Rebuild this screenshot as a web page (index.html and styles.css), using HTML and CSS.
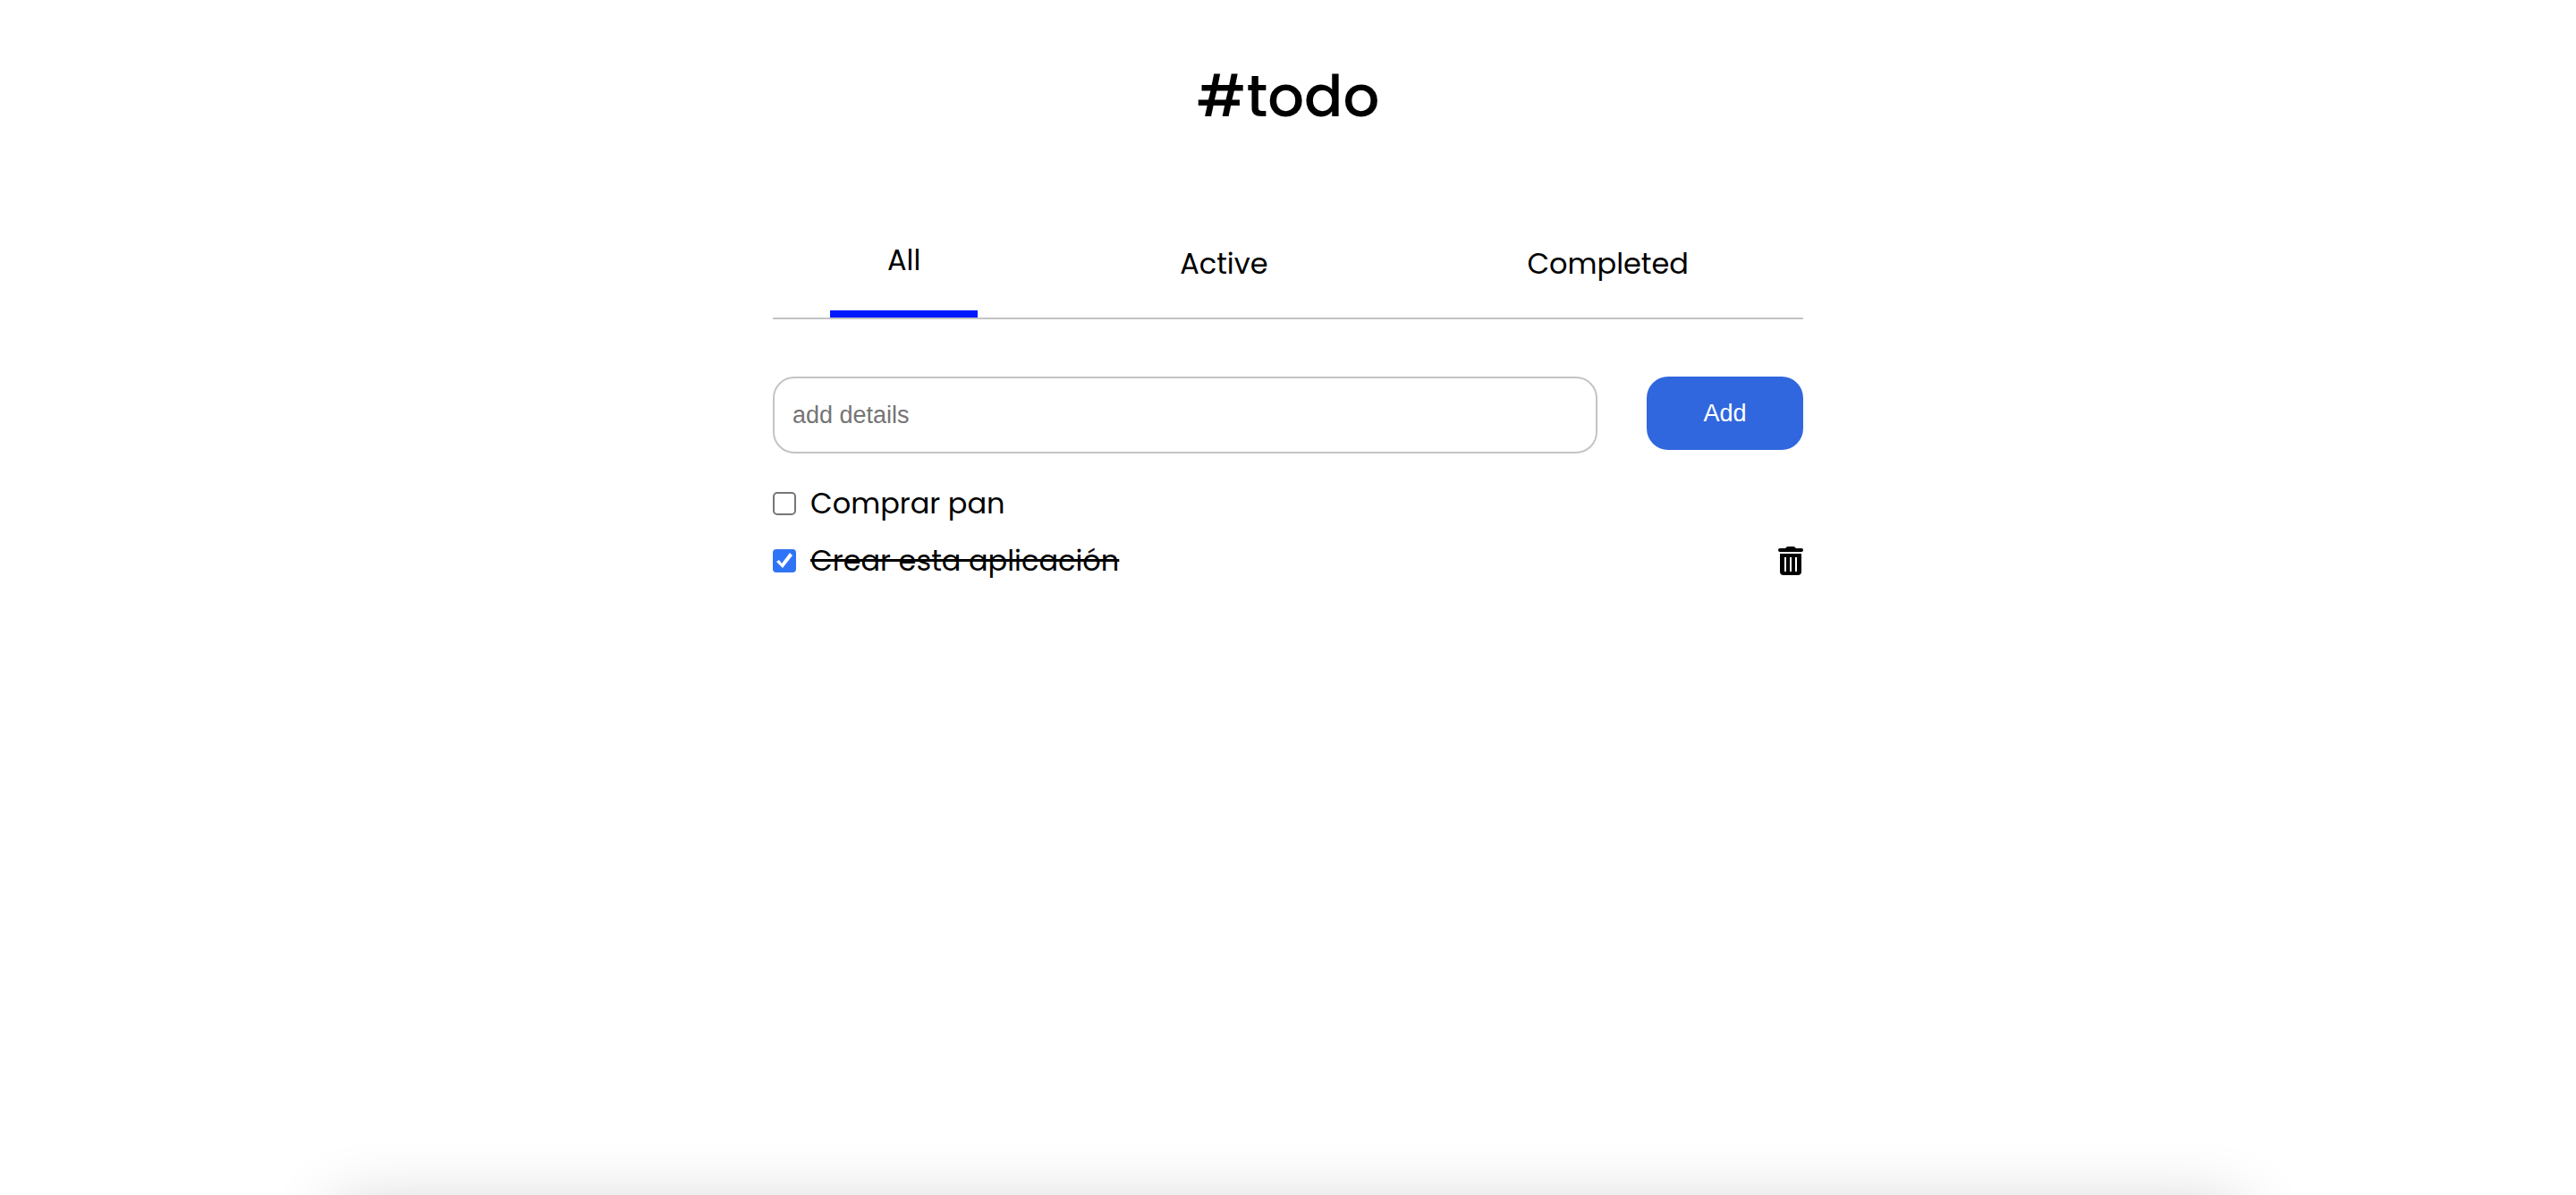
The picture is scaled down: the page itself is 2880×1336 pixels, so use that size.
FILE: index.html
```html
<!DOCTYPE html>
<html lang="es">
<head>
<meta charset="utf-8">
<meta name="viewport" content="width=device-width, initial-scale=1">
<title>#todo</title>
<link rel="stylesheet" href="styles.css">
</head>
<body>
<main class="app">
  <h1 class="title">#todo</h1>
  <nav class="tabs" aria-label="Filter">
    <button class="tab tab-selected" type="button">All</button>
    <button class="tab" type="button">Active</button>
    <button class="tab" type="button">Completed</button>
  </nav>
  <form class="add-form">
    <input class="add-input" type="text" placeholder="add details" aria-label="add details">
    <button class="add-button" type="button">Add</button>
  </form>
  <ul class="tasks">
    <li class="task">
      <input class="check" type="checkbox" id="task-1">
      <label class="task-label" for="task-1">Comprar pan</label>
    </li>
    <li class="task">
      <input class="check" type="checkbox" id="task-2" checked>
      <label class="task-label" for="task-2">Crear esta aplicación</label>
      <button class="delete" type="button" aria-label="Delete">
        <svg width="28" height="32" viewBox="0 0 28 32" aria-hidden="true">
          <path d="M2 2h6l1-1q1-1 2-1h6q1 0 2 1l1 1h6q2 0 2 2t-2 2H2Q0 6 0 4t2-2z"/>
          <path fill-rule="evenodd" d="M2 8h24v20q0 4-4 4H6q-4 0-4-4zM7 12v16h2V12zM13 12v16h2V12zM19 12v16h2V12z"/>
        </svg>
      </button>
    </li>
  </ul>
</main>
</body>
</html>
```

FILE: styles.css
```css
* {
  box-sizing: border-box;
}

body {
  margin: 0;
  min-height: 100vh;
  background: #fff;
  color: #000;
  font-family: Poppins, Inter, sans-serif;
  font-size: 32px;
  line-height: 48px;
}

/* soft shade along the lower edge of the window */
body::after {
  content: "";
  position: fixed;
  top: calc(100% + 14px);
  left: 13%;
  right: 13%;
  height: 200px;
  box-shadow: 0 0 76px rgba(0, 0, 0, 0.2);
}

button,
input {
  margin: 0;
  font-family: "Liberation Sans", Arial, sans-serif;
  font-size: 27px;
}

button {
  padding: 0;
  border: 0;
  background: none;
  cursor: pointer;
}

.app {
  width: 40%;
  margin: 0 auto;
  padding-top: 56px;
}

.title {
  margin: 0;
  font-size: 64px;
  font-weight: 500;
  line-height: 104px;
  text-align: center;
}

.tabs {
  display: flex;
  align-items: center;
  justify-content: space-between;
  margin-top: 72px;
  padding: 0 64px;
  border-bottom: 2px solid #c4c4c4;
}

.tab {
  height: 123px;
  padding: 2px 64px 0;
  color: #000;
  font-family: inherit;
  font-size: 32px;
}

.tab-selected {
  border-bottom: 8px solid #0019ff;
}

.add-form {
  display: flex;
  align-items: flex-start;
  gap: 55px;
  margin-top: 64px;
}

.add-input {
  flex: 1;
  min-width: 0;
  height: 86px;
  padding: 0 20px;
  border: 2px solid #c4c4c4;
  border-radius: 24px;
  background: #fff;
}

.add-input::placeholder {
  color: #757575;
  opacity: 1;
}

.add-button {
  width: 175px;
  height: 82px;
  border-radius: 24px;
  background: #3067de;
  color: #fff;
}

.tasks {
  margin: 24px 0 0;
  padding: 0;
  list-style: none;
}

.task {
  display: flex;
  align-items: center;
  height: 64px;
}

.check {
  appearance: none;
  flex: none;
  width: 26px;
  height: 26px;
  border: 2px solid #767676;
  border-radius: 5px;
  background: #fff;
}

.check:checked {
  border-color: #2f74f6;
  border-radius: 4px;
  background: #2f74f6;
}

.check:checked::before {
  content: "";
  display: block;
  width: 22px;
  height: 22px;
  background: #fff;
  clip-path: polygon(2px 12px, 5px 10px, 8px 14px, 17px 2px, 20px 5px, 9px 19px);
}

.task-label {
  margin-left: 16px;
}

.check:checked + .task-label {
  text-decoration: line-through;
  text-decoration-thickness: 3px;
}

.delete {
  display: flex;
  margin-left: auto;
}
```
